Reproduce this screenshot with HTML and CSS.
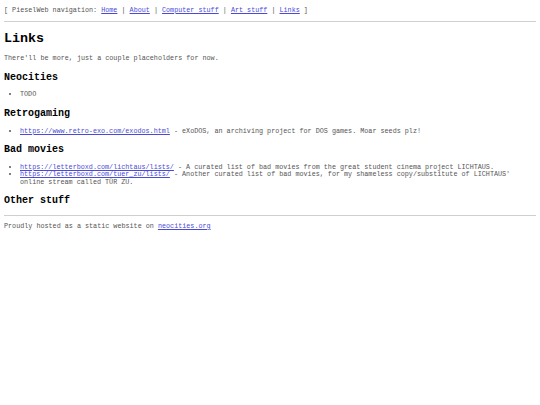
FILE: index.html
```html
<!DOCTYPE html>
<html>
<head>
<meta charset="utf-8">
<title>Links</title>
<link rel="stylesheet" href="styles.css">
</head>
<body>
<p class="nav">[ PieselWeb navigation: <a href="#">Home</a> | <a href="#">About</a> | <a href="#">Computer stuff</a> | <a href="#">Art stuff</a> | <a href="#">Links</a> ]</p>
<hr>
<h1>Links</h1>
<p>There'll be more, just a couple placeholders for now.</p>
<h2>Neocities</h2>
<ul>
<li>TODO</li>
</ul>
<h2>Retrogaming</h2>
<ul>
<li><a href="#">https://www.retro-exo.com/exodos.html</a> - eXoDOS, an archiving project for DOS games. Moar seeds plz!</li>
</ul>
<h2>Bad movies</h2>
<ul>
<li><a href="#">https://letterboxd.com/lichtaus/lists/</a> - A curated list of bad movies from the great student cinema project LICHTAUS.</li>
<li><a href="#">https://letterboxd.com/tuer_zu/lists/</a> - Another curated list of bad movies, for my shameless copy/substitute of LICHTAUS' online stream called TÜR ZU.</li>
</ul>
<h2>Other stuff</h2>
<hr>
<p class="footer">Proudly hosted as a static website on <a href="#">neocities.org</a></p>
</body>
</html>
```
FILE: styles.css
```css
html {
  background: #fff;
}
body {
  margin: 0 4px 4px;
  font-family: "Liberation Mono", "DejaVu Sans Mono", monospace;
  font-size: 6.75px;
  line-height: 1.133;
  color: #555;
}
p {
  margin: 6.667px 0;
}
.nav {
  margin-top: 6.6px;
}
a {
  color: #4a4ad8;
}
hr {
  margin: 3.33px 0;
  border: none;
  border-top: 1px solid #cfcfcf;
  height: 0;
}
h1 {
  font-size: 13.333px;
  margin: 9.4px 0 8.93px;
  color: #000;
}
h2 {
  font-size: 10px;
  margin: 8.6px 0;
  color: #000;
}
ul {
  margin: 6.667px 0;
  padding-left: 16px;
}
```
